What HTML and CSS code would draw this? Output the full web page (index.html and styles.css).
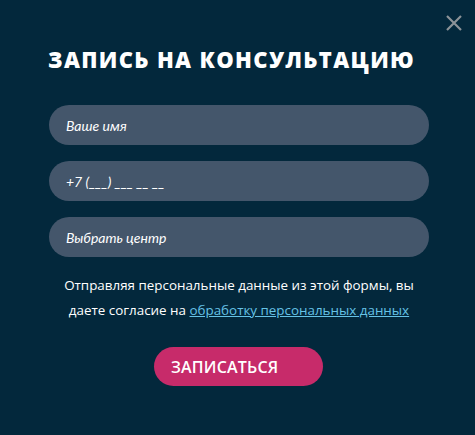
FILE: index.html
```html
<!DOCTYPE html>
<html lang="ru">
<head>
<meta charset="utf-8">
<link rel="stylesheet" href="styles.css">
</head>
<body>
<div class="modal">
  <button class="close" aria-label="Закрыть">
    <svg width="16" height="16" viewBox="0 0 16 16"><path d="M1 1L15 15M15 1L1 15" stroke="#8c9398" stroke-width="2.2" fill="none"/></svg>
  </button>
  <h1 class="title">ЗАПИСЬ НА КОНСУЛЬТАЦИЮ</h1>
  <form class="form">
    <div class="field">Ваше имя</div>
    <div class="field">+7 (___) ___ __ __</div>
    <div class="field">Выбрать центр</div>
    <p class="note">Отправляя персональные данные из этой формы, вы<br>даете согласие на <a href="#">обработку персональных данных</a></p>
    <div class="actions"><button type="button" class="submit">ЗАПИСАТЬСЯ</button></div>
  </form>
</div>
</body>
</html>
```
FILE: styles.css
```css
html, body {
  margin: 0;
  padding: 0;
  background: #03283c;
}
.modal {
  position: relative;
  width: 475px;
  height: 435px;
  box-sizing: border-box;
  padding-top: 45px;
  font-family: Lato, "Open Sans", sans-serif;
  color: #fff;
}
.close {
  position: absolute;
  top: 15px;
  left: 446px;
  width: 16px;
  height: 16px;
  padding: 0;
  border: 0;
  background: none;
  line-height: 0;
}
.title {
  margin: 0;
  text-align: center;
  font-family: "Open Sans", sans-serif;
  font-weight: 800;
  font-size: 22px;
  line-height: 28px;
  letter-spacing: 1.35px;
  padding-right: 12px;
}
.form {
  margin: 32px 0 0 49px;
  width: 380px;
  display: flex;
  flex-direction: column;
  gap: 16px;
}
.field {
  height: 40px;
  border-radius: 20px;
  background: #44566b;
  padding-left: 17px;
  display: flex;
  align-items: center;
  font-style: italic;
  font-size: 14px;
  color: #fff;
}
.note {
  margin: 0 -20px;
  text-align: center;
  font-family: "Open Sans", sans-serif;
  font-size: 13.4px;
  line-height: 25px;
}
.note a {
  color: #66c2e6;
  text-decoration: underline;
}
.actions {
  display: flex;
  justify-content: center;
  margin-top: 8px;
  padding-right: 1px;
}
.submit {
  width: 169px;
  height: 39px;
  border: 0;
  border-radius: 20px;
  background: #c72b6a;
  color: #fff;
  font-family: "Open Sans", sans-serif;
  font-weight: 600;
  font-size: 16px;
  letter-spacing: 0.2px;
  text-align: left;
  padding: 0 0 0 17px;
}
```
